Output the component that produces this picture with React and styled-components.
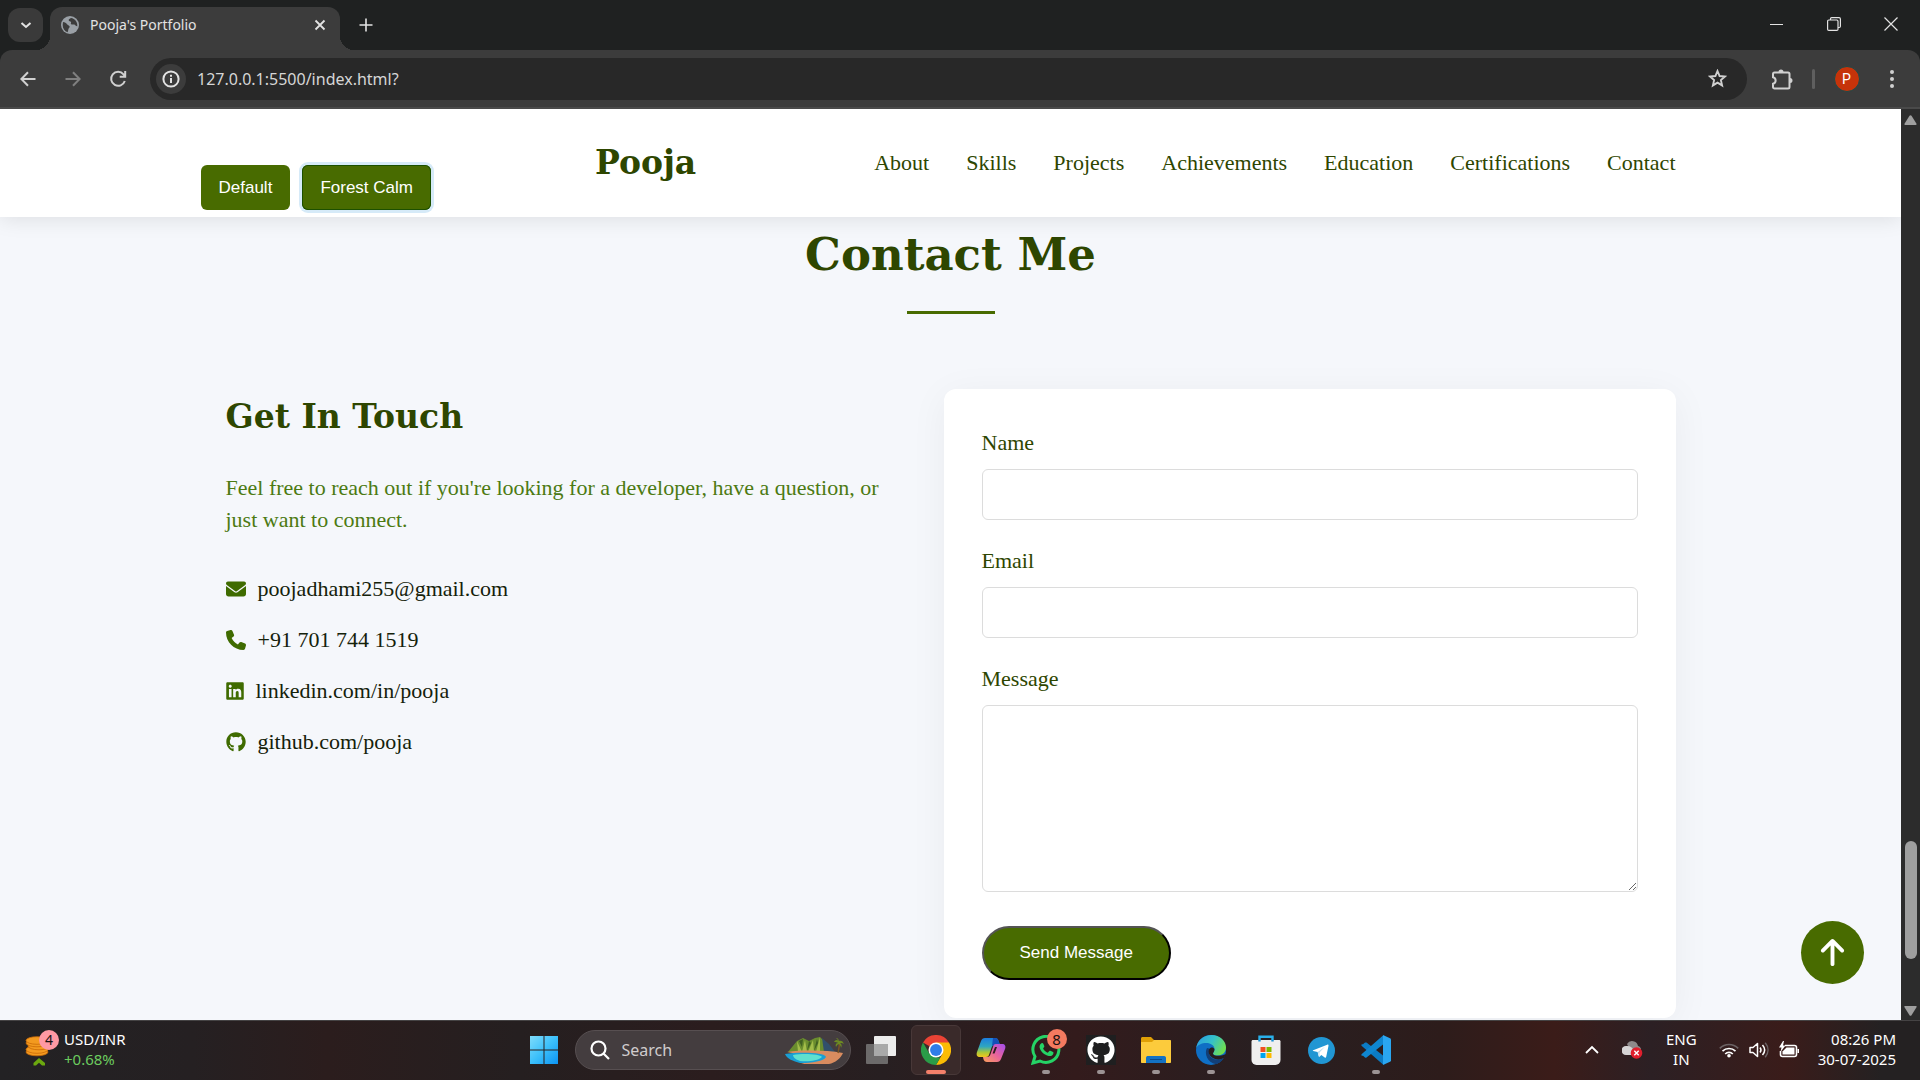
import React from "react";
import styled, { createGlobalStyle } from "styled-components";
import { FaEnvelope, FaPhone, FaLinkedin, FaGithub, FaArrowUp } from "react-icons/fa6";

const serif = `Georgia, "Liberation Serif", serif`;
const display = `Georgia, "DejaVu Serif", serif`;
const sans = `"Liberation Sans", Arial, sans-serif`;
const ui = `"Segoe UI", "Noto Sans", sans-serif`;

const GlobalStyle = createGlobalStyle`
  *, *::before, *::after { box-sizing: border-box; }
  body { margin: 0; background: #202121; }
  button { font: inherit; color: inherit; border: 0; padding: 0; background: none; cursor: pointer; }
  a { color: inherit; text-decoration: none; }
  svg { display: block; flex: none; }
`;

const Desktop = styled.div`
  display: flex;
  flex-direction: column;
  height: 100vh;
  overflow: hidden;
  font-family: ${ui};
`;

/* ---------- browser window ---------- */

const TabStrip = styled.div`
  display: flex;
  align-items: stretch;
  height: 50px;
  padding: 7px 1px 0 8px;
  background: #1f2121;
  color: #e3e3e3;
`;

const TabSearch = styled.button`
  display: grid;
  place-items: center;
  width: 35px;
  height: 34px;
  margin: 1px 7px 0 0;
  border-radius: 12px;
  background: #3a3a3a;
`;

const Tab = styled.div`
  position: relative;
  display: flex;
  align-items: center;
  gap: 11px;
  width: 290px;
  padding: 0 10px 7px 11px;
  border-radius: 12px 12px 0 0;
  background: #3c3c3c;
  font-size: 14px;
  line-height: 20px;

  &::before,
  &::after {
    content: "";
    position: absolute;
    bottom: 0;
    width: 14px;
    height: 14px;
  }
  &::before {
    right: 100%;
    background: radial-gradient(circle at 0 0, transparent 14px, #3c3c3c 14px);
  }
  &::after {
    left: 100%;
    background: radial-gradient(circle at 100% 0, transparent 14px, #3c3c3c 14px);
  }
`;

const TabTitle = styled.span`
  flex: 1;
`;

const TabButton = styled.button`
  display: grid;
  place-items: center;
  width: 20px;
  height: 20px;
`;

const NewTab = styled(TabButton)`
  width: 36px;
  height: 36px;
  margin-left: 8px;
`;

const WindowControls = styled.div`
  display: flex;
  margin-left: auto;
`;

const WindowButton = styled.button`
  display: grid;
  place-items: center;
  width: 57px;
  height: 34px;
`;

const ToolbarBack = styled.div`
  background: #1f2121;
`;

const Toolbar = styled.div`
  display: flex;
  align-items: center;
  height: 59px;
  padding: 0 6px 0 5px;
  border-radius: 12px 12px 0 0;
  border-bottom: 2px solid #4a4a4a;
  background: #3c3c3c;
  color: #d0d0d0;
`;

const ToolButton = styled.button`
  display: grid;
  place-items: center;
  width: 45px;
  height: 40px;
  color: ${(p) => (p.$dim ? "#7f7f7f" : "inherit")};
`;

const AddressBar = styled.div`
  display: flex;
  align-items: center;
  flex: 1;
  height: 42px;
  margin: 0 12px 0 10px;
  padding: 0 7px 0 6px;
  border-radius: 21px;
  background: #282828;
`;

const SiteInfo = styled.button`
  display: grid;
  place-items: center;
  width: 30px;
  height: 30px;
  border-radius: 50%;
  background: #3c3c3c;
  color: #e3e3e3;
`;

const AddressInput = styled.input`
  flex: 1;
  min-width: 0;
  margin: 0 0 0 11px;
  padding: 0;
  border: 0;
  outline: 0;
  background: transparent;
  color: #d6d6d6;
  font: 16px/24px ${ui};
`;

const Divider = styled.span`
  width: 3px;
  height: 20px;
  margin: 0 9px 0 8px;
  border-radius: 2px;
  background: #5f5f5f;
`;

const Avatar = styled.span`
  display: grid;
  place-items: center;
  width: 26px;
  height: 26px;
  border: 1px solid #1b4a4a;
  border-radius: 50%;
  background: #c6330a;
  color: #fff;
  font: 14px/24px Roboto, sans-serif;
`;

const Viewport = styled.div`
  display: flex;
  flex: 1;
  min-height: 0;
`;

const Page = styled.div`
  position: relative;
  flex: 1;
  min-width: 0;
  overflow: hidden;
  background: #f5f7fb;
  color: #2e4600;
  font: 22px/32px ${serif};
`;

const Scrollbar = styled.div`
  display: flex;
  flex-direction: column;
  align-items: center;
  width: 19px;
  padding: 5px 0 3px;
  background: #2c2c2c;
  color: #9f9f9f;
`;

const ScrollTrack = styled.div`
  display: flex;
  flex: 1;
  flex-direction: column;
  align-self: stretch;
  align-items: center;

  &::before { content: ""; flex: 715; }
  &::after { content: ""; flex: 46; }
`;

const ScrollThumb = styled.div`
  flex: 118;
  width: 12px;
  border-radius: 6px;
  background: #9f9f9f;
`;

/* ---------- portfolio page ---------- */

const Header = styled.header`
  position: relative;
  background: #fff;
  box-shadow: 0 2px 20px rgba(0, 0, 0, 0.1);
`;

const HeaderInner = styled.div`
  display: flex;
  align-items: center;
  width: 100%;
  max-width: 1500px;
  height: 108px;
  margin: 0 auto;
  padding-right: 25px;
`;

const ThemeButtons = styled.div`
  display: flex;
  align-self: flex-end;
  gap: 12px;
  padding-bottom: 7px;
`;

const ThemeButton = styled.button`
  height: 45px;
  padding: 0 18px;
  border-radius: 6px;
  background: #486b00;
  color: #fff;
  font: 17px/20px ${sans};
  ${(p) =>
    p.$active &&
    `box-shadow: inset 0 0 0 1px #1d5000, 0 0 0 3px #d6eaf8;`}
`;

const Logo = styled.a`
  margin-left: 164px;
  font: 700 33px/48px ${display};
`;

const Nav = styled.nav`
  display: flex;
  gap: 37px;
  margin-left: auto;
`;

const Section = styled.section`
  max-width: 1500px;
  margin: 0 auto;
  padding: 0 25px;
`;

const SectionTitle = styled.h2`
  display: flex;
  flex-direction: column;
  align-items: center;
  gap: 24px;
  margin: 0 0 75px;
  padding-top: 6px;
  font: 700 45px/64px ${display};

  &::after {
    content: "";
    width: 88px;
    height: 3px;
    background: #486b00;
  }
`;

const Columns = styled.div`
  display: grid;
  grid-template-columns: minmax(0, 658fr) minmax(0, 732fr);
  gap: 60px;
  align-items: start;
`;

const InfoTitle = styled.h3`
  margin: 0 0 31px;
  padding-top: 4px;
  font: 700 33px/48px ${display};
`;

const InfoText = styled.p`
  margin: 0 0 37px;
  color: #4c7a12;
`;

const ContactList = styled.ul`
  display: grid;
  gap: 19px;
  margin: 0;
  padding: 0;
  list-style: none;
  color: #14210a;
`;

const ContactItem = styled.li`
  display: flex;
  align-items: center;
  gap: 12px;

  svg {
    width: ${(p) => p.$iconWidth}px;
    height: 20px;
    color: #3f6b00;
  }
`;

const Card = styled.form`
  padding: 38px;
  border-radius: 12px;
  background: #fff;
  box-shadow: 0 6px 38px rgba(0, 0, 0, 0.05);
`;

const Field = styled.div`
  display: flex;
  flex-direction: column;
  gap: 10px;
  margin-bottom: ${(p) => (p.$last ? "34px" : "25px")};
`;

const control = `
  display: block;
  width: 100%;
  margin: 0;
  padding: 12px 16px;
  border: 1px solid #dcdcdc;
  border-radius: 6px;
  outline: 0;
  background: #fff;
  color: #14210a;
  font: 20px/25px ${sans};
`;

const TextInput = styled.input`
  ${control}
  height: 51px;
`;

const TextArea = styled.textarea`
  ${control}
  height: 187px;
  resize: vertical;
`;

const SendButton = styled.button`
  height: 54px;
  padding: 0 36px;
  border: 2px outset #000;
  border-radius: 27px;
  background: #486b00;
  color: #fff;
  font: 17px/20px ${sans};
`;

const BackToTop = styled.a`
  position: absolute;
  right: 37px;
  bottom: 36px;
  display: grid;
  place-items: center;
  width: 63px;
  height: 63px;
  border-radius: 50%;
  background: #486b00;
  color: #fff;
  font-size: 31px;
`;

/* ---------- taskbar ---------- */

const TaskbarRoot = styled.footer`
  display: grid;
  grid-template-columns: 1fr auto 1fr;
  align-items: center;
  height: 60px;
  box-shadow: inset 0 1px #454344;
  background: linear-gradient(
    90deg,
    #232224 0%, #252022 10%, #2b1d1d 17%, #251f20 27%, #2b1d1e 37%, #271f21 46%,
    #331b1c 56%, #281f21 66%, #2d1c1b 75%, #3b1c19 81%, #2c2024 86%, #3a1c1a 93%, #242122 98%
  );
  color: #fff;
  font: 15px/20px ${ui};
`;

const Widget = styled.button`
  display: flex;
  align-items: center;
  gap: 5px;
  padding-left: 25px;
  text-align: left;
`;

const Stack = styled.span`
  display: flex;
  flex-direction: column;
  padding-bottom: 2px;
  text-align: ${(p) => p.$align || "left"};
`;

const Gain = styled.span`
  color: #6ccb5f;
`;

const Apps = styled.div`
  display: flex;
  align-items: center;
`;

const AppButton = styled.button`
  position: relative;
  display: grid;
  place-items: center;
  width: 55px;
  height: 50px;
`;

const ActiveTile = styled.span`
  display: grid;
  place-items: center;
  width: 50px;
  height: 50px;
  border: 1px solid #483838;
  border-radius: 6px;
  background: #3a2a2a;
`;

const Indicator = styled.span`
  position: absolute;
  bottom: 1px;
  left: 50%;
  width: ${(p) => (p.$active ? 20 : 8)}px;
  height: 4px;
  border-radius: 2px;
  background: ${(p) => (p.$active ? "#f4806a" : "#9c9394")};
  transform: translateX(-50%);
`;

const CountBadge = styled.span`
  position: absolute;
  top: 4px;
  right: 7px;
  width: 20px;
  height: 20px;
  border-radius: 50%;
  background: #f47a60;
  color: #1a1010;
  font-size: 15px;
  text-align: center;
`;

const SearchBox = styled.label`
  display: flex;
  align-items: center;
  width: 276px;
  height: 40px;
  margin: 0 3px;
  padding: 0 6px 0 14px;
  border: 1px solid #574f51;
  border-radius: 20px;
  background: #443d3f;
`;

const SearchInput = styled.input`
  flex: 1;
  min-width: 0;
  margin-left: 12px;
  padding: 0;
  border: 0;
  outline: 0;
  background: transparent;
  color: #fff;
  font: 16px/24px ${ui};

  &::placeholder { color: #d0cccd; opacity: 1; }
`;

const Tray = styled.div`
  display: flex;
  align-items: center;
  justify-content: flex-end;
  padding-right: 24px;
`;

const TrayButton = styled.button`
  display: flex;
  align-items: center;
  justify-content: center;
  gap: ${(p) => p.$gap || 0}px;
  margin-left: ${(p) => p.$space || 0}px;
`;

/* ---------- drawings ---------- */

const Line = ({ size = 18, box = 18, w = 2, d, children }) => (
  <svg width={size} height={size} viewBox={`0 0 ${box} ${box}`} fill="none" stroke="currentColor" strokeWidth={w}>
    {d && <path d={d} />}
    {children}
  </svg>
);

const Globe = () => (
  <svg width="18" height="18" viewBox="0 0 18 18">
    <circle cx="9" cy="9" r="9" fill="#9aa0a6" />
    <path
      d="M2 6c2 0 3 1 4 2.200l2 1.500c1 .6.8 1.600 0 2.300-.9.800-.4 2-1.400 4.200C3.500 15.200 1.700 12.500 1.700 9zM10 2c-1 1-2.500.8-2.300 2.300.2 1.200 1.800.7 2.300 1.700.5.900-.8 1.500.2 2.200 1.200.8 2.200-.2 3.600.6.900.5 1 1.500 2.500 1.400C16.700 6 14 2.500 10 2z"
      fill="#3c3c3c"
    />
  </svg>
);

const Coins = () => (
  <svg width="34" height="40" viewBox="0 -4 34 40">
    <g fill="#f39a1f" stroke="#c96a08" strokeWidth="0.800">
      <ellipse cx="12" cy="18" rx="11" ry="3.800" />
      <ellipse cx="12" cy="15.500" rx="11" ry="3.800" />
      <ellipse cx="14" cy="12" rx="11" ry="3.800" />
      <ellipse cx="12" cy="9" rx="11" ry="3.800" />
      <ellipse cx="12" cy="6.500" rx="11" ry="3.800" />
    </g>
    <path d="M8.500 31.500V29l5.500-5 6 5v2.500h-3l-3-2.800-3 2.800z" fill="#6ba80f" />
    <circle cx="24" cy="6" r="10" fill="#ff99a4" />
    <text x="24" y="11" textAnchor="middle" fontSize="14" fill="#1a1010">4</text>
  </svg>
);

const WindowsLogo = () => (
  <svg width="30" height="30" viewBox="0 0 30 30">
    <defs>
      <linearGradient id="win" x1="0" y1="0" x2="1" y2="1">
        <stop offset="0" stopColor="#7fdcfb" />
        <stop offset="0.500" stopColor="#3cc0fb" />
        <stop offset="1" stopColor="#0c93f2" />
      </linearGradient>
    </defs>
    <path fill="url(#win)" d="M1 1h13.500v13.500H1zM15.500 1H29v13.500H15.500zM1 15.500h13.500V29H1zM15.500 15.500H29V29H15.500z" />
  </svg>
);

const Island = () => (
  <svg width="60" height="30" viewBox="0 0 60 30">
    <path d="M4 17 13 6l6-3 6 3 6-3 5-1 9 9 6 7z" fill="#6a8d2e" />
    <path d="m13 6 1 11h4zM21 5l-3 12h5zM29 5l-5 12h6zM36 2l-4 15h4z" fill="#a3bd4a" />
    <path d="m15 6 3 6 1-8zM25 6l-2 10 4-8zM33 4l-3 12 4-8z" fill="#3f5f22" />
    <path d="m38 3 2 14h11l-6-8z" fill="#31506b" />
    <path d="M3 17c16-2 38-2 56 1-2 5-8 10-14 11H17c9-3 17-5 17-8-8-2-22-2-31-4z" fill="#d98c5f" />
    <path d="M1 19c12-2 40-2 41 3-2 4-14 6-26 6C9 26 3 24 1 19z" fill="#1a9fd4" />
    <path d="M9 20c10-2 27-1 29 2-4 4-15 5-22 4-3-1-7-3-7-6z" fill="#5fe0cf" />
    <path d="M54 18c1-4 2-7 1-12" stroke="#7a5424" strokeWidth="1.500" fill="none" />
    <path d="M55 6c-2-2-4-1-5 1 2 0 3 0 4 1-2 0-3 2-2 4 1-2 2-3 3-3 1 1 2 2 2 4 1-2 1-4-1-5 2 0 3 0 4 1-1-3-3-4-5-3 0-1-1-3-3-3 1 1 2 2 3 3z" fill="#6d8a22" />
  </svg>
);

const TaskView = () => (
  <svg width="30" height="30" viewBox="0 0 30 30">
    <rect x="8" y="1" width="22" height="20" rx="1" fill="#ececec" />
    <rect x="0" y="9" width="22" height="20" rx="1" fill="#6c6a6a" />
    <path d="M8 9h14v12H8z" fill="#a9a9a9" />
  </svg>
);

const ChromeLogo = () => (
  <svg width="30" height="30" viewBox="0 0 48 48">
    <path d="M24 24 3.200 12A24 24 0 0 1 44.800 12z" fill="#ea4335" />
    <path d="M24 12h20.800A24 24 0 0 1 24 48l10.400-18z" fill="#fbbc04" />
    <path d="M3.200 12 13.600 30 24 36h7L24 48A24 24 0 0 1 3.200 12z" fill="#2a9c48" />
    <circle cx="24" cy="24" r="12" fill="#fff" />
    <circle cx="24" cy="24" r="9.500" fill="#2f7de9" />
  </svg>
);

const Copilot = () => (
  <svg width="30" height="28" viewBox="0 0 30 28">
    <defs>
      <linearGradient id="cpa" x1="0" y1="0" x2="0" y2="1">
        <stop offset="0" stopColor="#1c7de0" />
        <stop offset="0.450" stopColor="#2fa6c0" />
        <stop offset="0.750" stopColor="#a8c83a" />
        <stop offset="1" stopColor="#f3c51c" />
      </linearGradient>
      <linearGradient id="cpb" x1="1" y1="0" x2="0" y2="1">
        <stop offset="0" stopColor="#a24df0" />
        <stop offset="0.500" stopColor="#e8639c" />
        <stop offset="1" stopColor="#fba05a" />
      </linearGradient>
    </defs>
    <path d="M9 2h10c2 0 3 1 3.600 3L24 9h-5c-2 0-3 1-3.600 3L13 19c-.6 1-1 2-3 2H4c-3 0-4-2-3-5L5 5c.8-2 2-3 4-3z" fill="url(#cpa)" />
    <path d="M17 2h2c2 0 3 1 3.600 3L24 9h-5l-3 1z" fill="#1450b8" />
    <path
      d="M21 26H11c-2 0-3-1-3.600-3L7 21h4c2 0 3-1 3.600-3L17 11c.6-2 1-3 3-3h6c3 0 4 2 3 5l-4 10c-.8 2-2 3-4 3zM16.500 17.500h2L21 11h-2z"
      fill="url(#cpb)"
      fillRule="evenodd"
    />
  </svg>
);

const WhatsApp = () => (
  <svg width="30" height="30" viewBox="0 0 30 30">
    <path d="M2 28 4 21.500A13 13 0 1 1 9 26z" fill="none" stroke="#25d366" strokeWidth="3" />
    <path d="M10.500 8.200c.8-.5 1.500-.2 1.800.5l1 2.400c.2.500 0 1-1.200 2.300 1.100 2 2.500 3.300 4.700 4.300l1.500-1.700c.4-.4.800-.4 1.200-.2l2.500 1.200c.6.300.6 1.300.1 2.200-.7 1.400-2.600 2.200-4.300 1.800-4.600-1-8.200-4.400-9.200-8.500-.3-1.600.5-3.500 1.900-4.300z" fill="#25d366" />
  </svg>
);

const GithubTile = styled.span`
  display: grid;
  place-items: center;
  width: 30px;
  height: 30px;
  background: #1f1f20;
  font-size: 28px;
`;

const Folder = () => (
  <svg width="30" height="30" viewBox="0 0 30 30">
    <path d="M0 3.500C0 2.700.7 2 1.500 2H10l3 3h15v5H0z" fill="#e0a006" />
    <path d="M0 7h11l2-2h16c.6 0 1 .4 1 1v21c0 .6-.4 1-1 1H1c-.6 0-1-.4-1-1z" fill="#fccb3c" />
    <path d="M5 28v-5c0-1.500 1-2 2-2h16c1.500 0 2 1 2 2v5z" fill="#1372c4" />
    <path d="M9 24.500h12" stroke="#0a4b8c" strokeWidth="1" />
  </svg>
);

const EdgeLogo = () => (
  <svg width="30" height="30" viewBox="0 0 30 30">
    <defs>
      <linearGradient id="edg" x1="0" y1="0.200" x2="1" y2="0.600">
        <stop offset="0" stopColor="#2b9fe0" />
        <stop offset="0.500" stopColor="#35c1c8" />
        <stop offset="1" stopColor="#72e04c" />
      </linearGradient>
    </defs>
    <circle cx="15" cy="15" r="15" fill="#0f6fc5" />
    <path d="M.2 13C1.500 5 8 0 15.500 0 24 0 30 6 30 12.500c0 5-4 8-8.500 8-3 0-4.500-1-4.500-2 0-1 1.500-1.500 1.500-4.500 0-3.500-4-6-8-6-5 0-9 2-10.300 5z" fill="url(#edg)" />
    <path d="M11 13c-3 5 0 15 9 16.200 3-1 6-3.200 7.600-6-6 3-14.600 1-14.600-6 0-2 .7-3 1-3.500z" fill="#123f78" />
    <path d="M17 18.500c0-1 1.500-1.500 1.500-4.500-1-2-4-2.500-5.500.5-1 2.500 0 6 3 8 3.500 2.500 8.500 2.500 12 .5l2-3.500c-.5-.6-1.500 0-2 .3-4 1.500-11 1.700-11-1.300z" fill="#281d1f" />
  </svg>
);

const Store = () => (
  <svg width="30" height="30" viewBox="0 0 30 30">
    <path d="M8.500 7V1.800h13V7" fill="none" stroke="#29b0ea" strokeWidth="2.400" />
    <path d="M.5 6.500C.5 5.600 1 5 2 5h26c1 0 1.500.6 1.500 1.500V25a5 5 0 0 1-5 5h-19a5 5 0 0 1-5-5z" fill="#efefef" />
    <path d="M8.500 5v1.500M21.500 5v1.500" stroke="#1490d6" strokeWidth="2.400" />
    <path d="M9.500 12h5v5h-5z" fill="#f25022" />
    <path d="M15.500 12h5v5h-5z" fill="#7fba00" />
    <path d="M9.500 18h5v5h-5z" fill="#00a4ef" />
    <path d="M15.500 18h5v5h-5z" fill="#ffb900" />
  </svg>
);

const Telegram = () => (
  <svg width="27" height="27" viewBox="0 0 26 26">
    <circle cx="13" cy="13" r="13" fill="#2196d3" />
    <path d="m5 12.800 13.500-5.400c.8-.3 1.400.2 1.200 1.200l-2.200 10.600c-.2.800-.8 1-1.400.6L12.800 17.300l-1.700 1.600c-.4.300-.8.200-.9-.3l-.9-4.200L5 13.600c-.5-.2-.5-.6 0-.8z" fill="#fff" />
    <path d="m9.300 14.400 7-5-5.200 5.600v3.900z" fill="#b9dcf0" />
  </svg>
);

const VSCode = () => (
  <svg width="30" height="30" viewBox="0 0 30 30">
    <path d="M2 9.200 4 7.600c.5-.3 1-.3 1.500 0L22 20.500v9L.8 11c-.6-.6-.6-1.200 0-1.700z" fill="#0b7bc4" />
    <path d="M2 20.800 4 22.400c.5.300 1 .3 1.500 0L22 9.500v-9L.8 19c-.6.600-.6 1.200 0 1.700z" fill="#0f86d0" />
    <path d="m22 0 7 3.200c.6.300 1 .8 1 1.500v20.600c0 .7-.4 1.200-1 1.500L22 30z" fill="#2aa6f0" />
  </svg>
);

const Cloud = () => (
  <svg width="21" height="20" viewBox="0 0 21 20">
    <path d="M5 4a6 6 0 0 1 11 2c2 .5 3 2 3 4l-10 2z" fill="#8e8a8b" />
    <path d="M4 15a4.500 4.500 0 0 1 0-9c4-.5 6 1.500 7 3v6z" fill="#d6d4d5" />
    <circle cx="14.500" cy="13" r="5.800" fill="#e01f2d" />
    <path d="m12.300 10.800 4.400 4.400m0-4.400-4.400 4.400" stroke="#fff" strokeWidth="1.400" />
  </svg>
);

const Wifi = () => (
  <svg width="20" height="16" viewBox="0 0 20 16" fill="none" strokeWidth="1.700">
    <path d="M.8 6.300a13 13 0 0 1 18.400 0" stroke="#6b6264" />
    <path d="M3.500 9.200a9.200 9.200 0 0 1 13 0M6.200 12a5.400 5.400 0 0 1 7.600 0" stroke="#fff" />
    <circle cx="10" cy="13.800" r="1.800" fill="#fff" />
  </svg>
);

const Volume = () => (
  <svg width="20" height="18" viewBox="0 0 20 18" fill="none" stroke="#fff" strokeWidth="1.500">
    <path d="M1 6.500h3L8.500 2.500v13L4 11.500H1z" strokeLinejoin="round" />
    <path d="M11 6.500c1.200 1.500 1.200 3.500 0 5M13.500 4c2.600 3 2.600 7 0 10" />
    <path d="M16.200 1.800c3.700 4.400 3.700 10 0 14.400" stroke="#6b6264" />
  </svg>
);

const Battery = () => (
  <svg width="21" height="18" viewBox="0 0 21 18">
    <path d="M6 4.500h9.500a2 2 0 0 1 2 2v7a2 2 0 0 1-2 2h-12a2 2 0 0 1-2-2V10" fill="none" stroke="#fff" strokeWidth="1.600" />
    <path d="M7.500 6.500h8v7h-12v-3z" fill="#fff" />
    <path d="M18.500 8h1.500v4h-1.500z" fill="#fff" />
    <path d="M4 0 0 6.500h2.500L1.500 11l5-6.500H4L5 0z" fill="#fff" />
  </svg>
);

/* ---------- composition ---------- */

const navLinks = ["About", "Skills", "Projects", "Achievements", "Education", "Certifications", "Contact"];

const contacts = [
  { Icon: FaEnvelope, width: 20, text: "poojadhami255@gmail.com", href: "mailto:poojadhami255@gmail.com" },
  { Icon: FaPhone, width: 20, text: "+91 701 744 1519", href: "tel:+917017441519" },
  { Icon: FaLinkedin, width: 18, text: "linkedin.com/in/pooja", href: "#linkedin" },
  { Icon: FaGithub, width: 20, text: "github.com/pooja", href: "#github" },
];

const apps = [
  { name: "Task view", icon: <TaskView /> },
  { name: "Google Chrome", icon: <ChromeLogo />, active: true },
  { name: "Copilot", icon: <Copilot /> },
  { name: "WhatsApp", icon: <WhatsApp />, running: true, count: 8 },
  { name: "GitHub Desktop", icon: <GithubTile><FaGithub /></GithubTile>, running: true },
  { name: "File Explorer", icon: <Folder />, running: true },
  { name: "Microsoft Edge", icon: <EdgeLogo />, running: true },
  { name: "Microsoft Store", icon: <Store /> },
  { name: "Telegram", icon: <Telegram /> },
  { name: "Visual Studio Code", icon: <VSCode />, running: true },
];

function BrowserChrome() {
  return (
    <>
      <TabStrip>
        <TabSearch aria-label="Search tabs">
          <Line size={12} box={12} d="m1.500 4 4.500 4 4.500-4" />
        </TabSearch>
        <Tab>
          <Globe />
          <TabTitle>Pooja's Portfolio</TabTitle>
          <TabButton aria-label="Close tab">
            <Line size={12} box={12} w={1.8} d="m1.500 1.500 9 9m0-9-9 9" />
          </TabButton>
        </Tab>
        <NewTab aria-label="New tab">
          <Line size={14} box={14} w={1.6} d="M7 .5v13M.5 7h13" />
        </NewTab>
        <WindowControls>
          <WindowButton aria-label="Minimize">
            <Line size={13} box={13} w={1} d="M0 6.500h13" />
          </WindowButton>
          <WindowButton aria-label="Restore">
            <Line size={14} box={14} w={1.2} d="M3.500 3V1.800c0-.7.500-1.200 1.200-1.200H12c.8 0 1.400.6 1.400 1.400v7.300c0 .7-.5 1.200-1.200 1.200H11M1.800 3h8c.7 0 1.200.5 1.200 1.200v8c0 .7-.5 1.200-1.200 1.200h-8c-.7 0-1.200-.5-1.200-1.200v-8C.6 3.500 1.100 3 1.800 3z" />
          </WindowButton>
          <WindowButton aria-label="Close">
            <Line size={14} box={14} w={1.2} d="m.5.500 13 13m0-13-13 13" />
          </WindowButton>
        </WindowControls>
      </TabStrip>
      <ToolbarBack>
        <Toolbar>
          <ToolButton aria-label="Back">
            <Line size={16} box={16} d="M15.500 8H1.500M8 1.200 1.400 8 8 14.800" />
          </ToolButton>
          <ToolButton $dim aria-label="Forward">
            <Line size={16} box={16} d="M.5 8h14M8 1.200 14.600 8 8 14.800" />
          </ToolButton>
          <ToolButton aria-label="Reload">
            <Line size={18} box={18} d="M15.800 11A7 7 0 1 1 14.500 4.300L16 6M16.200 1v5.800h-5.500" />
          </ToolButton>
          <AddressBar>
            <SiteInfo aria-label="View site information">
              <Line size={18} box={18}>
                <circle cx="9" cy="9" r="7.600" />
                <path d="M9 8v5M9 4.800v2" />
              </Line>
            </SiteInfo>
            <AddressInput aria-label="Address" defaultValue="127.0.0.1:5500/index.html?" />
            <ToolButton aria-label="Bookmark this tab">
              <Line size={19} box={19} w={1.9} d="m9.500 2 2.100 5 5.400.5-4.100 3.600 1.200 5.300-4.600-2.800-4.600 2.800 1.200-5.300L2 7.500 7.400 7z" />
            </ToolButton>
          </AddressBar>
          <ToolButton aria-label="Extensions">
            <Line size={22} box={22} d="M3.500 4.500H17c.8 0 1.500.7 1.500 1.500v13c0 .8-.7 1.500-1.500 1.500H3.500c-.8 0-1.500-.7-1.500-1.500v-3.200c3.500-.8 3.500-5.800 0-6.600V6c0-.8.700-1.500 1.500-1.500z">
              <path d="M7.500 4a2.500 2.500 0 0 1 5 0zM19 10a2.500 2.500 0 0 1 0 5z" fill="currentColor" stroke="none" />
            </Line>
          </ToolButton>
          <Divider />
          <ToolButton aria-label="Profile">
            <Avatar>P</Avatar>
          </ToolButton>
          <ToolButton aria-label="Menu">
            <svg width="4" height="18" viewBox="0 0 4 18" fill="currentColor">
              <circle cx="2" cy="2" r="2" />
              <circle cx="2" cy="9" r="2" />
              <circle cx="2" cy="16" r="2" />
            </svg>
          </ToolButton>
        </Toolbar>
      </ToolbarBack>
    </>
  );
}

function Portfolio() {
  return (
    <Page id="top">
      <Header>
        <HeaderInner>
          <ThemeButtons>
            <ThemeButton>Default</ThemeButton>
            <ThemeButton $active>Forest Calm</ThemeButton>
          </ThemeButtons>
          <Logo href="#top">Pooja</Logo>
          <Nav>
            {navLinks.map((name) => (
              <a key={name} href={`#${name.toLowerCase()}`}>{name}</a>
            ))}
          </Nav>
        </HeaderInner>
      </Header>
      <Section id="contact">
        <SectionTitle>Contact Me</SectionTitle>
        <Columns>
          <div>
            <InfoTitle>Get In Touch</InfoTitle>
            <InfoText>
              Feel free to reach out if you're looking for a developer, have a question, or just want to connect.
            </InfoText>
            <ContactList>
              {contacts.map(({ Icon, width, text, href }) => (
                <ContactItem key={text} $iconWidth={width}>
                  <Icon />
                  <a href={href}>{text}</a>
                </ContactItem>
              ))}
            </ContactList>
          </div>
          <Card onSubmit={(e) => e.preventDefault()}>
            <Field>
              <label htmlFor="name">Name</label>
              <TextInput id="name" type="text" />
            </Field>
            <Field>
              <label htmlFor="email">Email</label>
              <TextInput id="email" type="email" />
            </Field>
            <Field $last>
              <label htmlFor="message">Message</label>
              <TextArea id="message" />
            </Field>
            <SendButton type="submit">Send Message</SendButton>
          </Card>
        </Columns>
      </Section>
      <BackToTop href="#top" aria-label="Back to top">
        <FaArrowUp />
      </BackToTop>
    </Page>
  );
}

function Taskbar() {
  return (
    <TaskbarRoot>
      <Widget>
        <Coins />
        <Stack>
          <span>USD/INR</span>
          <Gain>+0.68%</Gain>
        </Stack>
      </Widget>
      <Apps>
        <AppButton aria-label="Start">
          <WindowsLogo />
        </AppButton>
        <SearchBox>
          <Line size={20} box={20} w={2.2}>
            <circle cx="8.500" cy="8.500" r="7" />
            <path d="m13.500 13.500 5.500 5.500" />
          </Line>
          <SearchInput aria-label="Search" placeholder="Search" />
          <Island />
        </SearchBox>
        {apps.map(({ name, icon, active, running, count }) => (
          <AppButton key={name} aria-label={name}>
            {active ? <ActiveTile>{icon}</ActiveTile> : icon}
            {(active || running) && <Indicator $active={active} />}
            {count && <CountBadge>{count}</CountBadge>}
          </AppButton>
        ))}
      </Apps>
      <Tray>
        <TrayButton aria-label="Show hidden icons">
          <Line size={14} box={14} w={1.8} d="m1 10 6-6 6 6" />
        </TrayButton>
        <TrayButton $space={23} aria-label="OneDrive">
          <Cloud />
        </TrayButton>
        <TrayButton $space={23}>
          <Stack $align="center">
            <span>ENG</span>
            <span>IN</span>
          </Stack>
        </TrayButton>
        <TrayButton $space={22} $gap={10} aria-label="Network, volume and battery">
          <Wifi />
          <Volume />
          <Battery />
        </TrayButton>
        <TrayButton $space={18}>
          <Stack $align="right">
            <span>08:26 PM</span>
            <span>30-07-2025</span>
          </Stack>
        </TrayButton>
      </Tray>
    </TaskbarRoot>
  );
}

export default function App() {
  return (
    <Desktop>
      <GlobalStyle />
      <BrowserChrome />
      <Viewport>
        <Portfolio />
        <Scrollbar>
          <svg width="13" height="12" viewBox="0 0 13 12" fill="currentColor">
            <path d="M5.500 1.800c.5-.8 1.500-.8 2 0l5 8c.4.700 0 1.200-.8 1.200H1.300c-.8 0-1.200-.5-.8-1.200z" />
          </svg>
          <ScrollTrack>
            <ScrollThumb />
          </ScrollTrack>
          <svg width="13" height="12" viewBox="0 0 13 12" fill="currentColor">
            <path d="M5.500 10.200c.5.800 1.500.8 2 0l5-8c.4-.7 0-1.200-.8-1.200H1.300C.5 1 .1 1.500.5 2.200z" />
          </svg>
        </Scrollbar>
      </Viewport>
      <Taskbar />
    </Desktop>
  );
}
